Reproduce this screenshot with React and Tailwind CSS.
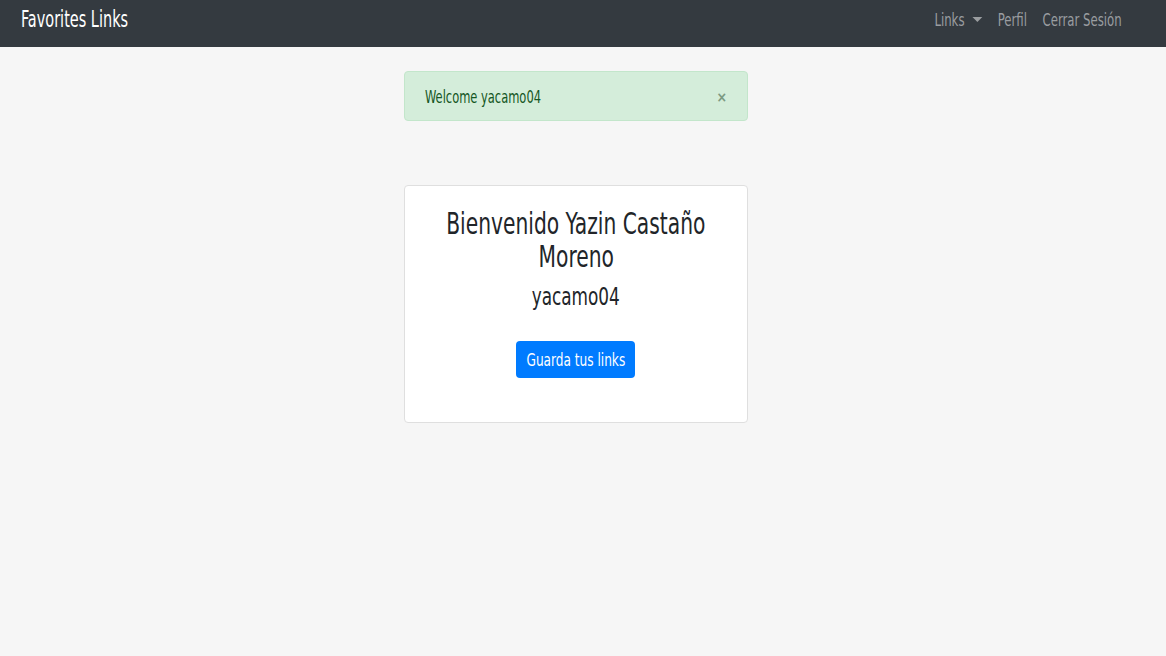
function S({ children, className = "" }) {
  return <span className={"inline-block whitespace-nowrap " + className}>{children}</span>;
}

export default function App() {
  const font = { fontFamily: '"DejaVu Sans Condensed", "DejaVu Sans", sans-serif' };
  return (
    <div className="min-h-[656px] bg-[#f6f6f6]" style={font}>
      <nav className="h-[47px] bg-[#343a40] flex items-start justify-between pl-[21px] pr-[44px]">
        <S className="origin-left scale-x-[0.70] mt-[6px] text-white text-[23px] leading-[27px]">Favorites Links</S>
        <div className="flex items-start mt-[9px] text-[18.5px] leading-[22px] text-[#9a9da0] origin-right scale-x-[0.705]">
          <span className="whitespace-nowrap">Links</span>
          <span className="ml-[11px] mt-[8px] inline-block w-0 h-0 border-l-[7px] border-r-[7px] border-t-[5px] border-l-transparent border-r-transparent border-t-[#9a9da0]"></span>
          <span className="ml-[22px] whitespace-nowrap">Perfil</span>
          <span className="ml-[22px] whitespace-nowrap">Cerrar Sesión</span>
        </div>
      </nav>
      <div className="flex flex-col items-center pr-[14px]">
        <div className="mt-[24px] w-[344px] h-[50px] bg-[#d4edda] border border-[#c3e6cb] rounded-[4px] flex items-start justify-between pt-[15px] pl-[20px] pr-[20px] text-[#155724]">
          <S className="origin-left scale-x-[0.75] text-[17px] leading-[20px]">Welcome yacamo04</S>
          <span className="mt-[3px] text-[#7c9a82] text-[14px] font-bold leading-[14px]">×</span>
        </div>
        <div className="mt-[64px] w-[344px] h-[238px] bg-white border border-[#dfdfdf] rounded-[4px] flex flex-col items-center pt-[21px] text-[#212529]">
          <h3 className="text-[30px] leading-[33px] text-center">
            <S className="origin-center scale-x-[0.75]">Bienvenido Yazin Castaño</S>
            <br />
            <S className="origin-center scale-x-[0.75]">Moreno</S>
          </h3>
          <h4 className="text-[25px] leading-[30px] mt-[9px]">
            <S className="origin-center scale-x-[0.75]">yacamo04</S>
          </h4>
          <button className="mt-[29px] mr-[1px] h-[37px] w-[119px] bg-[#007bff] text-white rounded-[4px] text-[18px] leading-[22px] flex items-center justify-center">
            <S className="origin-center scale-x-[0.75]">Guarda tus links</S>
          </button>
        </div>
      </div>
    </div>
  );
}
